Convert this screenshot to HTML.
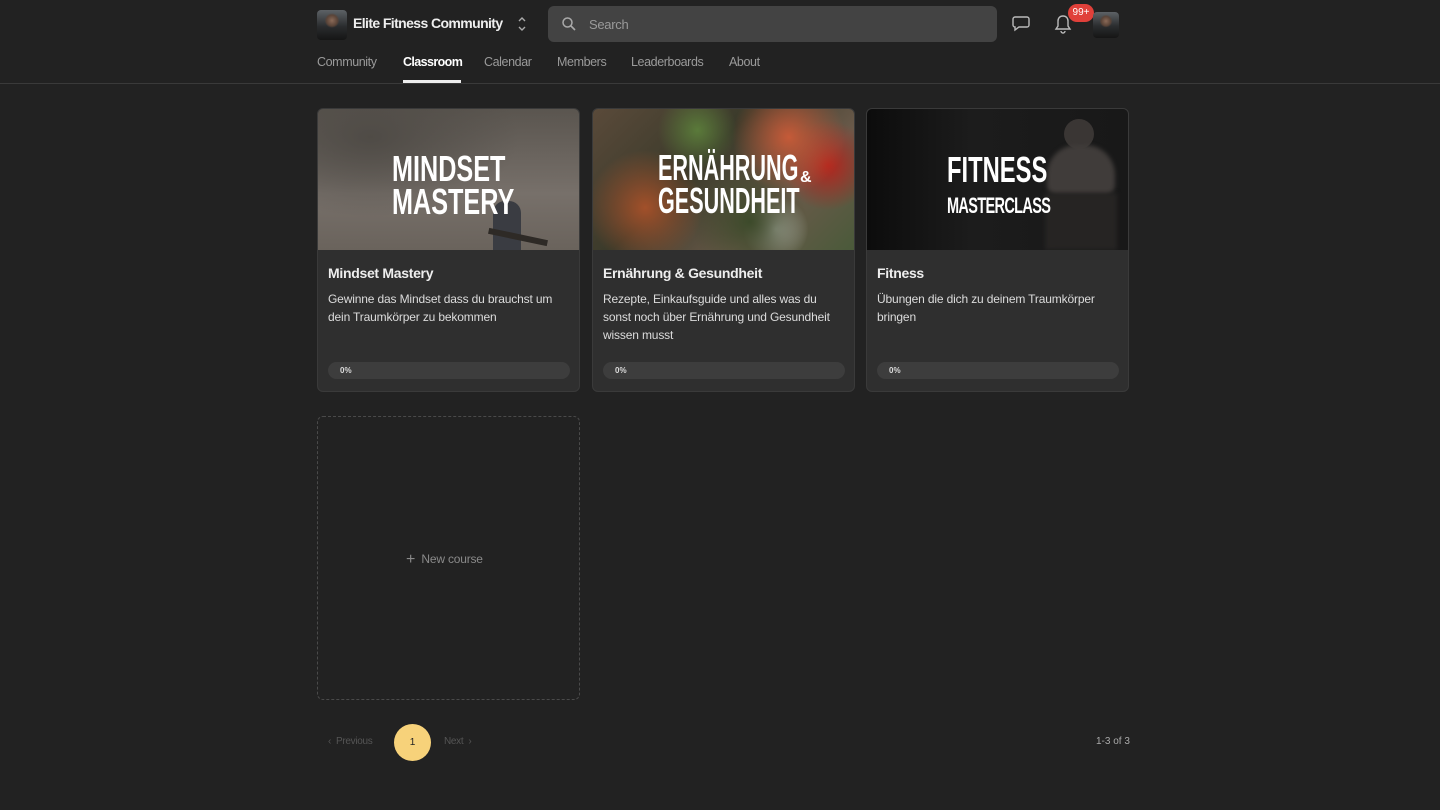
<!DOCTYPE html>
<html><head><meta charset="utf-8"><style>
*{box-sizing:border-box;margin:0;padding:0}
body{width:1440px;height:810px;background:#222222;font-family:"Liberation Sans",sans-serif;color:#e6e6e6;overflow:hidden;position:relative}
.hdr{position:absolute;left:0;top:0;width:1440px;height:84px;border-bottom:1px solid #3a3a3a}
.av{position:absolute;border-radius:4px;background:radial-gradient(circle at 50% 35%,#8a6a58 0,#5a4438 22%,transparent 30%),linear-gradient(180deg,#5d6266,#2a2c2e 55%,#151515)}
.title{position:absolute;left:353px;top:15px;font-size:14px;font-weight:bold;color:#eee;letter-spacing:-.6px}
.search{position:absolute;left:548px;top:6px;width:449px;height:36px;background:#434343;border-radius:6px}
.search span{position:absolute;left:41px;top:11px;font-size:13px;color:#9a9a9a;letter-spacing:-.3px}
.nav{position:absolute;top:55px;font-size:12.5px;color:#9a9a9a;letter-spacing:-.4px}
.nav.act{color:#fff;font-weight:bold;letter-spacing:-.6px}
.card{position:absolute;top:108px;width:263px;height:284px;background:#2f2f2f;border:1px solid #3a3a3a;border-radius:6px;overflow:hidden}
.img{height:141px;position:relative;overflow:hidden}
.img .t{position:absolute;color:#fff;font-weight:bold;font-family:"Liberation Sans Narrow","Liberation Sans",sans-serif;line-height:.92;transform-origin:left top}
.card h3{position:absolute;left:10px;top:156px;font-size:14px;color:#eee;letter-spacing:-.3px}
.card p{position:absolute;left:10px;top:181px;width:240px;font-size:12px;line-height:18px;color:#dcdcdc;letter-spacing:-.15px}
.bar{position:absolute;left:10px;top:253px;width:242px;height:17px;background:#3d3d3d;border-radius:9px;font-size:8px;font-weight:bold;color:#ddd;padding:4px 0 0 12px}
.new{position:absolute;left:317px;top:416px;width:263px;height:284px;border:1px dashed #4a4a4a;border-radius:6px}
.nl{position:absolute;left:88px;top:133px;font-size:12px;color:#8a8a8a;letter-spacing:-.2px;white-space:nowrap}
</style></head><body>
<div class="hdr">
<div class="av" style="left:317px;top:10px;width:30px;height:30px"></div>
<div class="title">Elite Fitness Community</div>
<svg style="position:absolute;left:516px;top:15px" width="12" height="18" viewBox="0 0 12 18"><path d="M3 6l3-3 3 3M3 12l3 3 3-3" stroke="#aaa" stroke-width="1.4" fill="none"/></svg>
<div class="search"><svg style="position:absolute;left:13px;top:10px" width="16" height="16" viewBox="0 0 16 16"><circle cx="6.5" cy="6.5" r="4.5" stroke="#aaa" stroke-width="1.5" fill="none"/><path d="M10 10l4 4" stroke="#aaa" stroke-width="1.6"/></svg><span>Search</span></div>
<svg style="position:absolute;left:1011px;top:15px" width="20" height="18" viewBox="0 0 20 18"><path d="M4 2h12a2 2 0 0 1 2 2v6a2 2 0 0 1-2 2H8l-4 3v-3a2 2 0 0 1-2-2V4a2 2 0 0 1 2-2z" stroke="#bbb" stroke-width="1.4" fill="none"/></svg>
<svg style="position:absolute;left:1054px;top:14px" width="18" height="20" viewBox="0 0 18 20"><path d="M9 2c-3 0-5 2-5 5v5l-2 3h14l-2-3V7c0-3-2-5-5-5zM7 17a2 2 0 0 0 4 0" stroke="#bbb" stroke-width="1.4" fill="none"/></svg>
<div style="position:absolute;left:1068px;top:4px;width:26px;height:18px;background:#e0403a;border-radius:9px;font-size:10px;color:#fff;text-align:center;line-height:18px">99+</div>
<div class="av" style="left:1093px;top:12px;width:26px;height:26px"></div>
<div class="nav" style="left:317px">Community</div>
<div class="nav act" style="left:403px">Classroom</div>
<div style="position:absolute;left:403px;top:80px;width:58px;height:3px;background:#eee"></div>
<div class="nav" style="left:484px">Calendar</div>
<div class="nav" style="left:557px">Members</div>
<div class="nav" style="left:631px">Leaderboards</div>
<div class="nav" style="left:729px">About</div>
</div>

<div class="card" style="left:317px">
<div class="img" style="background:radial-gradient(ellipse at 20% 20%,#4f4b46,transparent 50%),linear-gradient(180deg,#5a554f,#77706a 60%,#6a635c)">
<div style="position:absolute;left:175px;top:92px;width:28px;height:49px;background:#3a3c42;border-radius:12px 12px 0 0"></div>
<div style="position:absolute;left:170px;top:125px;width:60px;height:6px;background:#2e2a26;transform:rotate(12deg)"></div>
<div class="t" style="left:74px;top:43px;font-size:36px;transform:scaleX(.7)">MINDSET<br>MASTERY</div></div>
<h3>Mindset Mastery</h3><p>Gewinne das Mindset dass du brauchst um dein Traumkörper zu bekommen</p><div class="bar">0%</div></div>

<div class="card" style="left:592px">
<div class="img" style="background:radial-gradient(circle at 75% 20%,#c55a38,transparent 25%),radial-gradient(circle at 90% 40%,#b3241c,transparent 18%),radial-gradient(circle at 20% 70%,#a2502a,transparent 25%),radial-gradient(circle at 40% 15%,#5a7a3a,transparent 20%),radial-gradient(circle at 60% 80%,#3c4a2a,transparent 30%),radial-gradient(circle at 70% 85%,#b8b8b0,transparent 15%),linear-gradient(135deg,#5a4a3a,#3a3a2a 40%,#6a5a4a 70%,#4a5a3a)">
<div class="t" style="left:65px;top:42px;font-size:36px;transform:scaleX(.6)">ERNÄHRUNG<br>GESUNDHEIT</div>
<div class="t" style="left:207px;top:62px;font-size:16px">&amp;</div></div>
<h3>Ernährung &amp; Gesundheit</h3><p>Rezepte, Einkaufsguide und alles was du sonst noch über Ernährung und Gesundheit wissen musst</p><div class="bar">0%</div></div>

<div class="card" style="left:866px">
<div class="img" style="background:linear-gradient(90deg,#0c0c0c 0%,#1c1c1c 40%,#181818 100%)">
<div style="position:absolute;left:197px;top:10px;width:30px;height:30px;border-radius:50%;background:#3a3634"></div>
<div style="position:absolute;left:180px;top:36px;width:68px;height:50px;border-radius:30px 30px 10px 10px;background:#403c3a;filter:blur(2px)"></div>
<div style="position:absolute;left:178px;top:84px;width:72px;height:57px;background:#262423;filter:blur(2px)"></div>
<div class="t" style="left:80px;top:46px;font-size:36px;transform:scaleX(.66);line-height:.85">FITNESS<br><span style="font-size:22px;letter-spacing:-1px">MASTERCLASS</span></div></div>
<h3>Fitness</h3><p>Übungen die dich zu deinem Traumkörper bringen</p><div class="bar">0%</div></div>

<div class="new"><div class="nl"><span style="font-size:16px;position:relative;top:1px">+</span>&nbsp; New course</div></div>

<div style="position:absolute;left:328px;top:736px;font-size:10px;color:#555;letter-spacing:-.3px">‹&nbsp; Previous</div>
<div style="position:absolute;left:394px;top:724px;width:37px;height:37px;border-radius:50%;background:#f7d27a;color:#222;font-size:10px;text-align:center;line-height:37px">1</div>
<div style="position:absolute;left:444px;top:736px;font-size:10px;color:#555;letter-spacing:-.3px">Next &nbsp;›</div>
<div style="position:absolute;left:1096px;top:736px;font-size:10px;color:#aaa">1-3 of 3</div>
</body></html>
